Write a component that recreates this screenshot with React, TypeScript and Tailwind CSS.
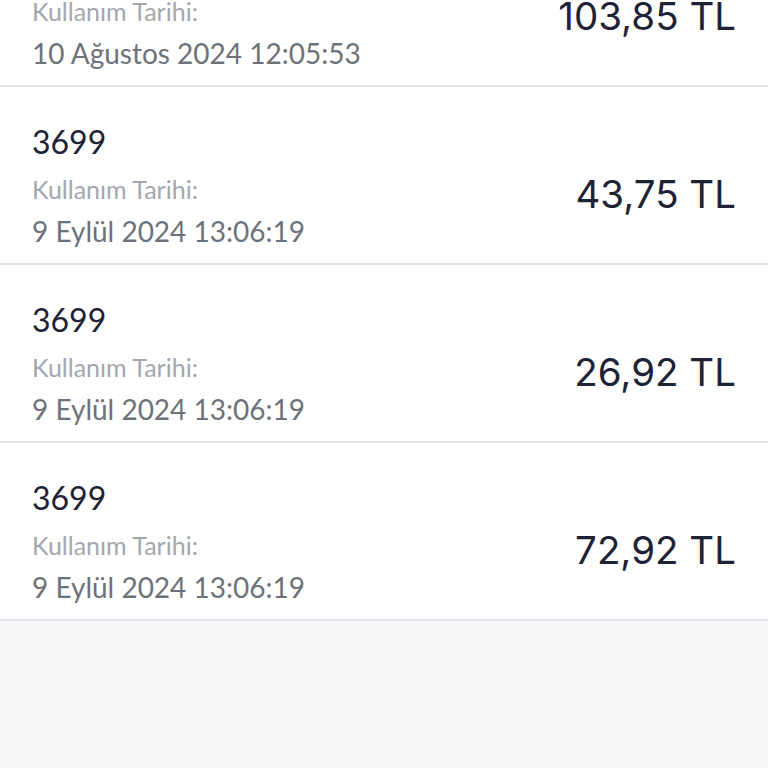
const items = [
  { code: "3699", date: "10 Ağustos 2024 12:05:53", amount: "103,85 TL" },
  { code: "3699", date: "9 Eylül 2024 13:06:19", amount: "43,75 TL" },
  { code: "3699", date: "9 Eylül 2024 13:06:19", amount: "26,92 TL" },
  { code: "3699", date: "9 Eylül 2024 13:06:19", amount: "72,92 TL" },
];

export default function App() {
  return (
    <div className="h-[768px] w-[768px] overflow-hidden bg-[#f5f7f9]">
      {/* list is scrolled: first row partly hidden */}
      <div className="-mt-[91px] bg-white">
        {items.map((item, i) => (
          <div
            key={i}
            className="flex h-[178px] items-start justify-between border-b-2 border-[#e2e6eb] px-8 pt-[35px]"
          >
            <div className="flex flex-col font-['Lato',sans-serif]">
              <span className="text-[32px] leading-[40px] text-[#1e2235]">{item.code}</span>
              <span className="mt-[11px] text-[25px] leading-[32px] text-[#a3a7ae]">Kullanım Tarihi:</span>
              <span className="mt-[8px] text-[28px] leading-[36px] text-[#6d727a]">{item.date}</span>
            </div>
            <span className="mt-[48px] font-['Inter',sans-serif] text-[38.5px] leading-[48px] text-[#1e2235]">
              {item.amount}
            </span>
          </div>
        ))}
      </div>
    </div>
  );
}
